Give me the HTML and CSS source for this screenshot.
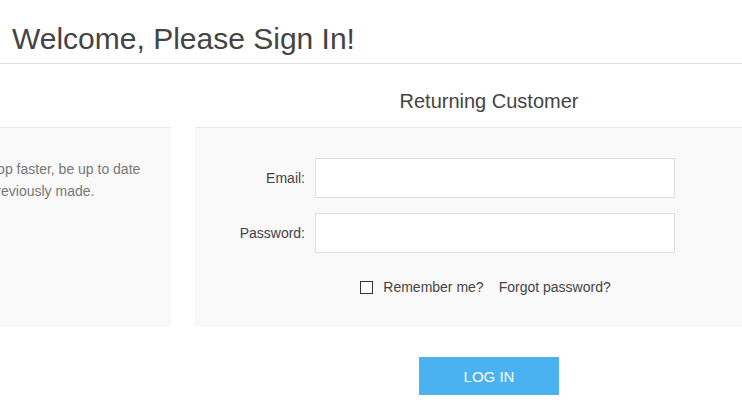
FILE: index.html
```html
<!DOCTYPE html>
<html lang="en">
<head>
<meta charset="utf-8">
<title>Login</title>
<link rel="stylesheet" href="styles.css">
</head>
<body>
<div class="page">
  <div class="page-title"><h1>Welcome, Please Sign In!</h1></div>
  <div class="customer-blocks">
    <div class="block new-wrapper">
      <div class="title">New Customer</div>
      <div class="text">By creating an account on our website, you will be able to shop faster, be up to date<br>on an orders status, and keep track of the orders you have previously made.</div>
    </div>
    <div class="block returning-wrapper">
      <div class="title">Returning Customer</div>
      <form class="form-fields">
        <div class="inputs">
          <label class="field-label" for="email">Email:</label>
          <input class="field" id="email" type="text">
        </div>
        <div class="inputs">
          <label class="field-label" for="password">Password:</label>
          <input class="field" id="password" type="password">
        </div>
        <div class="inputs reversed">
          <input class="check" id="remember" type="checkbox">
          <label class="check-label" for="remember">Remember me?</label>
          <span class="forgot">Forgot password?</span>
        </div>
      </form>
      <div class="buttons"><button class="login-button" type="button">Log in</button></div>
    </div>
  </div>
</div>
</body>
</html>
```
FILE: styles.css
```css
html, body {
  margin: 0;
  padding: 0;
  background: #fff;
  overflow: hidden;
}
body {
  font-family: "Liberation Sans", Arial, sans-serif;
  font-size: 14px;
  color: #444;
}
.page-title {
  padding: 21px 10px 7px 12px;
  border-bottom: 1px solid #ddd;
}
.page-title h1 {
  margin: 0;
  font-size: 30px;
  line-height: 35px;
  font-weight: normal;
  color: #444;
}
.customer-blocks {
  display: flex;
  gap: 24px;
  width: 1200px;
  margin-left: -417px;
}
.block {
  width: 588px;
  flex: 0 0 588px;
}
.title {
  padding: 25px 10px 14px;
  font-size: 20px;
  line-height: 24px;
  text-align: center;
  color: #444;
}
.text {
  box-sizing: border-box;
  min-height: 200px;
  border-top: 1px solid #e9e9e9;
  background: #f9f9f9;
  padding: 30px 30px 30px 39px;
  line-height: 22px;
  color: #777;
  white-space: nowrap;
}
.form-fields {
  box-sizing: border-box;
  min-height: 200px;
  margin: 0;
  border-top: 1px solid #e9e9e9;
  background: #f9f9f9;
  padding: 30px 0 21px;
}
.inputs {
  display: flex;
  align-items: center;
  margin-bottom: 15px;
}
.field-label {
  width: 110px;
  margin-right: 10px;
  text-align: right;
  color: #444;
}
.field {
  box-sizing: border-box;
  width: 360px;
  height: 40px;
  margin: 0;
  border: 1px solid #ddd;
  background: #fff;
  padding: 0 10px;
  font: inherit;
}
.inputs.reversed {
  justify-content: center;
  height: 38px;
  margin: 0;
  padding-right: 7px;
}
.check {
  appearance: none;
  -webkit-appearance: none;
  box-sizing: border-box;
  width: 13px;
  height: 13px;
  margin: 0 10px 0 0;
  border: 1px solid #333;
  border-radius: 0;
  background: #fff;
}
.check-label {
  margin-right: 15px;
  color: #444;
}
.forgot {
  color: #444;
}
.buttons {
  padding-top: 30px;
  text-align: center;
}
.login-button {
  width: 140px;
  height: 38px;
  border: none;
  background: #4ab2f1;
  color: #fff;
  font-family: "Liberation Sans", Arial, sans-serif;
  font-size: 15px;
  text-transform: uppercase;
  padding: 0;
}
```
